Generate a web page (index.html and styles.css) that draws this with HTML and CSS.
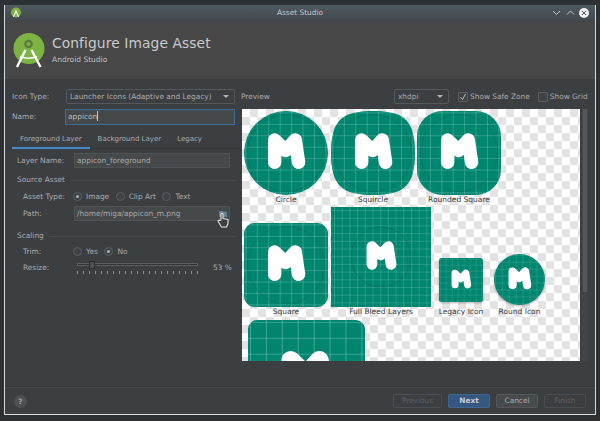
FILE: index.html
```html
<!DOCTYPE html>
<html lang="en">
<head>
<meta charset="utf-8">
<title>Asset Studio</title>
<link rel="stylesheet" href="styles.css">
</head>
<body>
<svg class="defs" width="0" height="0" aria-hidden="true">
  <defs>
    <pattern id="grid" width="13.6" height="13.6" x="1.700" y="1.700" patternUnits="userSpaceOnUse">
      <path d="M0 0H13.6M0 0V13.6" fill="none" stroke="#fff" stroke-opacity=".45" stroke-width="1"/>
    </pattern>
    <pattern id="grid-fine" width="7.700" height="7.700" x="3" y="3" patternUnits="userSpaceOnUse">
      <path d="M0 0H7.700M0 0V7.700" fill="none" stroke="#fff" stroke-opacity=".36" stroke-width=".8"/>
    </pattern>
    <symbol id="m" viewBox="0 0 100 100">
      <path d="M36.500 61V34.500L49.500 47 61 34.500 65 61" fill="none" stroke="#fff" stroke-width="16" stroke-linecap="round" stroke-linejoin="round"/>
    </symbol>
  </defs>
</svg>
<div class="window">
  <div class="titlebar">
    <svg class="tb-logo" viewBox="0 0 12 12"><circle cx="6" cy="5.500" r="5" fill="#7cb342"/><path d="M3.500 10 6 4l2.500 6" fill="none" stroke="#fff" stroke-width="1.100"/></svg>
    <span class="tb-title">Asset Studio</span>
    <svg class="tb-btns" viewBox="0 0 40 12"><path d="M1 4l3.500 3.500L8 4M15 7.500l3.500-3.500L22 7.500" fill="none" stroke="#c5cacd" stroke-width="1"/><circle cx="32" cy="6" r="5" fill="#eceff1"/><path d="M30 4l4 4M34 4l-4 4" stroke="#555" stroke-width="1"/></svg>
  </div>
  <header class="banner">
    <svg class="logo" viewBox="0 0 32 36">
      <circle cx="16" cy="15.500" r="15.500" fill="#7cb342"/>
      <circle cx="15.500" cy="11" r="3.200" fill="none" stroke="#5a7a3c" stroke-width="2.200"/>
      <path d="M12.500 17 4 34M18.500 17 27.500 34" fill="none" stroke="#fff" stroke-width="2.400"/>
      <path d="M7 23.500Q16 27 24 23.500" fill="none" stroke="#fff" stroke-width="1.400"/>
    </svg>
    <div class="banner-text">
      <h1>Configure Image Asset</h1>
      <p>Android Studio</p>
    </div>
  </header>
  <main class="body">
    <section class="left">
      <div class="top-row">
        <label class="top-label">Icon Type:</label>
        <div class="select wide">Launcher Icons (Adaptive and Legacy)<i class="caret"></i></div>
      </div>
      <div class="top-row name-row">
        <label class="top-label">Name:</label>
        <div class="input focus">appicon<i class="text-cursor"></i></div>
      </div>
      <nav class="tabs">
        <span class="tab active">Foreground Layer</span>
        <span class="tab">Background Layer</span>
        <span class="tab">Legacy</span>
      </nav>
      <div class="form">
        <div class="row layer-row">
          <label class="lbl-a">Layer Name:</label>
          <div class="input field">appicon_foreground</div>
        </div>
        <div class="group">Source Asset</div>
        <div class="row type-row">
          <label class="lbl-b">Asset Type:</label>
          <span class="radio on"></span><span class="opt">Image</span>
          <span class="radio"></span><span class="opt">Clip Art</span>
          <span class="radio"></span><span class="opt">Text</span>
        </div>
        <div class="row path-row">
          <label class="lbl-b">Path:</label>
          <div class="input field path">/home/miga/appicon_m.png
            <svg class="folder" viewBox="0 0 9 7"><path d="M0 0h4l1 1h4v6H0z" fill="#6d8599"/></svg>
            <svg class="hand" viewBox="0 0 13 16"><path d="M4 8V2.200a1 1 0 0 1 2 0V6.500l5 1v4L9.500 15H4.500L1.200 9.500c-.5-1 .8-1.800 1.500-1z" fill="#3c3f41" stroke="#e4e4e4" stroke-width="1.100" stroke-linejoin="round"/></svg>
          </div>
        </div>
        <div class="group scaling">Scaling</div>
        <div class="row trim-row">
          <label class="lbl-b">Trim:</label>
          <span class="radio"></span><span class="opt">Yes</span>
          <span class="radio on"></span><span class="opt">No</span>
        </div>
        <div class="row resize-row">
          <label class="lbl-b">Resize:</label>
          <div class="slider"><i class="track"></i><i class="thumb"></i><i class="ticks"></i></div>
          <span class="pct">53 %</span>
        </div>
      </div>
    </section>
    <section class="right">
      <div class="preview-bar">
        <span class="preview-label">Preview</span>
        <div class="select dpi">xhdpi<i class="caret"></i></div>
        <span class="check on"><svg viewBox="0 0 8 8"><path d="M1.500 4l2 2.500L6.500 1" fill="none" stroke="#bbb" stroke-width="1"/></svg></span><span class="chk-text">Show Safe Zone</span>
        <span class="check second"></span><span class="chk-text">Show Grid</span>
      </div>
      <div class="preview-wrap">
        <div class="preview">
          <div class="canvas">
            <figure class="ico s84">
              <svg viewBox="0 0 100 100"><circle cx="50" cy="50" r="50" fill="#00856f"/><circle cx="50" cy="50" r="50" fill="url(#grid)"/><circle cx="50" cy="50" r="46" fill="none" stroke="#000" stroke-opacity=".12"/><use href="#m" width="100" height="100"/></svg>
              <figcaption>Circle</figcaption>
            </figure>
            <figure class="ico s84 tight">
              <svg viewBox="0 0 100 100"><path d="M50 0C88 0 100 12 100 50S88 100 50 100 0 88 0 50 12 0 50 0z" fill="#00856f"/><path d="M50 0C88 0 100 12 100 50S88 100 50 100 0 88 0 50 12 0 50 0z" fill="url(#grid)"/><circle cx="50" cy="50" r="46" fill="none" stroke="#000" stroke-opacity=".12"/><use href="#m" width="100" height="100"/></svg>
              <figcaption>Squircle</figcaption>
            </figure>
            <figure class="ico s84">
              <svg viewBox="0 0 100 100"><rect width="100" height="100" rx="30" fill="#00856f"/><rect width="100" height="100" rx="30" fill="url(#grid)"/><circle cx="50" cy="50" r="46" fill="none" stroke="#000" stroke-opacity=".12"/><use href="#m" width="100" height="100"/></svg>
              <figcaption>Rounded Square</figcaption>
            </figure>
            <div class="break"></div>
            <figure class="ico s84">
              <svg viewBox="0 0 100 100"><rect width="100" height="100" rx="13" fill="#00856f"/><rect width="100" height="100" rx="13" fill="url(#grid)"/><circle cx="50" cy="50" r="46" fill="none" stroke="#000" stroke-opacity=".12"/><use href="#m" width="100" height="100"/></svg>
              <figcaption>Square</figcaption>
            </figure>
            <figure class="ico s100">
              <svg viewBox="0 0 100 100"><rect width="100" height="100" fill="#00856f"/><rect width="100" height="100" fill="url(#grid-fine)"/><circle cx="50" cy="50" r="30" fill="none" stroke="#000" stroke-opacity=".12"/><use href="#m" x="16.500" y="16.500" width="67" height="67"/></svg>
              <figcaption>Full Bleed Layers</figcaption>
            </figure>
            <figure class="ico s44">
              <svg viewBox="0 0 100 100"><rect width="100" height="100" rx="6" fill="#00856f"/><rect width="100" height="100" rx="6" fill="url(#grid)"/><use href="#m" width="100" height="100"/></svg>
              <figcaption>Legacy Icon</figcaption>
            </figure>
            <figure class="ico s51">
              <svg viewBox="0 0 100 100"><circle cx="50" cy="50" r="50" fill="#00856f"/><circle cx="50" cy="50" r="50" fill="url(#grid)"/><use href="#m" width="100" height="100"/></svg>
              <figcaption>Round Icon</figcaption>
            </figure>
            <div class="break"></div>
            <figure class="ico s117">
              <svg viewBox="0 0 100 100"><rect width="100" height="100" rx="8" fill="#00856f"/><rect width="100" height="100" rx="8" fill="url(#grid)"/><use href="#m" width="100" height="100"/></svg>
            </figure>
          </div>
        </div>
        <div class="scrollbar"><i class="scroll-thumb"></i></div>
      </div>
    </section>
  </main>
  <footer class="footer">
    <span class="help">?</span>
    <div class="buttons">
      <span class="btn off prev">Previous</span>
      <span class="btn primary">Next</span>
      <span class="btn">Cancel</span>
      <span class="btn off">Finish</span>
    </div>
  </footer>
</div>
</body>
</html>
```

FILE: styles.css
```css
* { box-sizing: border-box; }
html, body { margin: 0; padding: 0; }
body {
  width: 600px;
  height: 421px;
  overflow: hidden;
  background: #2e3133;
  padding: 5px 4px;
  font: 7.4px/10px "DejaVu Sans", sans-serif;
  color: #a9abad;
}
.defs { display: block; position: absolute; }
.window {
  width: 592px;
  height: 410px;
  display: flex;
  flex-direction: column;
  background: #3c3f41;
  border-left: 1px solid #d9dcdd;
  border-right: 1px solid #d9dcdd;
  border-bottom: 1px solid #d9dcdd;
}
.titlebar {
  height: 16px;
  flex: none;
  display: flex;
  align-items: center;
  background: linear-gradient(#4f5a61, #42484c);
  padding: 0 3px;
}
.tb-title { color: #c4c7c9; flex: 1; text-align: center; }
.tb-logo { width: 12px; height: 12px; margin-right: 28px; flex: none; transform: translateX(2px); }
.tb-btns { width: 40px; height: 12px; flex: none; }
.banner {
  height: 58px;
  flex: none;
  background: #474747;
  display: flex;
  align-items: flex-start;
  padding: 12px 0 0 8px;
}
.logo { width: 32px; height: 36px; }
.banner-text { margin-left: 7px; }
.banner h1 { margin: 1px 0 0; font: 400 13.8px/18px "DejaVu Sans", sans-serif; color: #c8cacb; letter-spacing: .1px; }
.banner p { margin: 3px 0 0; font-size: 7.5px; line-height: 9px; color: #bfc1c2; }
.body { flex: 1; display: flex; min-height: 0; border-bottom: 1px solid #373a3c; }
.left { width: 236px; flex: none; padding: 10px 0 0 0; }
.top-row { display: flex; align-items: center; height: 15px; padding-left: 7px; }
.name-row { margin-top: 5px; height: 16px; }
.top-label { width: 53px; }
.select {
  border: 1px solid #55585a;
  border-radius: 2px;
  height: 15px;
  line-height: 13px;
  padding-left: 3px;
  position: relative;
  color: #a9abad;
}
.wide { width: 169px; margin-left: 1px; }
.caret {
  position: absolute;
  right: 5px;
  top: 5px;
  width: 0;
  height: 0;
  border: 3px solid transparent;
  border-top: 3px solid #b0b2b4;
  border-bottom: 0;
}
.input {
  height: 15px;
  line-height: 13px;
  padding-left: 2px;
  border: 1px solid #56595b;
  background: #45494a;
  color: #a9abad;
  position: relative;
}
.focus { width: 170px; height: 16px; line-height: 14px; border: 1px solid #3f6b96; color: #bbb; }
.text-cursor { display: inline-block; width: 1px; height: 10px; background: #c8c8c8; vertical-align: -2px; }
.tabs { display: flex; height: 17px; margin-top: 7px; border-bottom: 1px solid #35383a; padding-left: 7px; }
.tab { padding: 0 8px; line-height: 14px; font-size: 7px; height: 16px; }
.active { border-bottom: 2px solid #4a88c7; height: 17px; }
.form { padding: 4px 0 0 12px; }
.row { display: flex; align-items: center; height: 15px; }
.lbl-a { width: 57px; }
.lbl-b { width: 50px; margin-left: 6px; }
.field { width: 156px; background: #45494a; border-color: #505355; }
.path-row .field { margin-left: 1px; }
.group { display: flex; align-items: center; gap: 5px; height: 10px; margin-top: 7px; }
.group::after { content: ""; flex: 1; height: 1px; background: #474a4c; margin-right: 6px; }
.type-row { margin-top: 4px; }
.radio {
  width: 9px;
  height: 9px;
  border-radius: 50%;
  border: 1px solid #5b5e60;
  background: #3f4345;
  margin-right: 4px;
  flex: none;
  position: relative;
}
.radio.on::after {
  content: "";
  position: absolute;
  left: 2px;
  top: 2px;
  width: 3px;
  height: 3px;
  border-radius: 50%;
  background: #b0b2b4;
}
.opt { margin-right: 6.5px; }
.path-row { margin-top: 2px; }
.path { color: #a9abad; }
.folder { position: absolute; right: 2px; top: 4px; width: 8px; height: 6px; }
.hand { position: absolute; right: -1px; top: 5px; width: 13px; height: 16px; z-index: 2; }
.scaling { margin-top: 10px; }
.trim-row { margin-top: 3px; }
.resize-row { margin-top: 1px; }
.slider { width: 121px; height: 15px; position: relative; margin-left: 4px; }
.track { position: absolute; left: 0; right: 0; top: 3px; height: 3px; border: 1px solid #5b5e60; background: #333; }
.thumb { position: absolute; left: 12px; top: 1px; width: 6px; height: 8px; background: #4d5153; border: 1px solid #2c2c2c; }
.ticks {
  position: absolute;
  left: 0;
  right: 0;
  top: 11px;
  height: 3px;
  background: repeating-linear-gradient(90deg, #8a8c8e 0 1px, transparent 1px 6px);
}
.pct { margin-left: 15px; }
.right { flex: 1; padding: 10px 0 0 0; display: flex; flex-direction: column; min-width: 0; }
.preview-bar { display: flex; align-items: center; height: 15px; }
.preview-label { width: 153px; }
.dpi { width: 55px; }
.check {
  width: 10px;
  height: 10px;
  border: 1px solid #5b5e60;
  background: #3f4345;
  border-radius: 1px;
  margin: 0 2px 0 9px;
  flex: none;
  display: block;
}
.check svg { display: block; width: 8px; height: 8px; }
.second { margin-left: 8px; }
.chk-text { white-space: nowrap; }
.preview-wrap { display: flex; margin: 5px 0 0 1px; height: 252px; }
.preview { width: 338px; height: 252px; flex: none; overflow: hidden; background: #fff conic-gradient(#e3e3e3 25%, #fff 0 50%, #e3e3e3 0 75%, #fff 0) 0 0 / 16px 16px; }
.canvas { display: flex; flex-wrap: wrap; align-items: flex-end; padding: 2px 0 0 2px; width: 338px; }
.break { flex: 0 0 100%; height: 0; }
.ico { margin: 0 3px 0 0; display: flex; flex-direction: column; align-items: center; }
.ico svg { display: block; }
.ico figcaption { color: #3b3b3b; line-height: 10px; height: 12px; white-space: nowrap; font-size: 7.5px; }
.s84 { width: 84px; }
.s84 svg { width: 84px; height: 84px; }
.tight { margin-right: 2px; }
.s100 { width: 100px; margin-right: 8px; }
.s100 svg { width: 100px; height: 100px; }
.s44 { width: 44px; margin-right: 11px; }
.s44 svg { width: 44px; height: 44px; margin-bottom: 5px; filter: drop-shadow(0 1px 1px rgba(0,0,0,.3)); }
.s51 { width: 51px; }
.s51 svg { width: 51px; height: 51px; margin-bottom: 2px; filter: drop-shadow(0 1px 1px rgba(0,0,0,.3)); }
.s117 { width: 117px; margin: 1px 0 0 4px; }
.s117 svg { width: 117px; height: 117px; }
.scrollbar { width: 6px; margin-left: 2px; background: #424547; }
.scroll-thumb { display: block; height: 183px; margin: 0 1px; background: #55585a; }
.footer {
  flex: none;
  height: 27px;
  display: flex;
  align-items: center;
  padding: 0 9px;
  border-top: 1px solid #44474a;
}
.help {
  width: 13px;
  height: 13px;
  border-radius: 50%;
  background: #4d5153;
  color: #a3a5a7;
  font-weight: 700;
  text-align: center;
  line-height: 13px;
}
.buttons { margin-left: auto; display: flex; gap: 6px; }
.btn {
  width: 42px;
  height: 14px;
  line-height: 12px;
  text-align: center;
  border: 1px solid #55585a;
  border-radius: 2px;
  background: #474a4c;
  color: #a9abad;
}
.prev { width: 49px; }
.off { background: transparent; border-color: #4b4e50; color: #5d6062; }
.primary { background: #365880; border-color: #3f6790; color: #c5ccd3; font-weight: 700; }
```
